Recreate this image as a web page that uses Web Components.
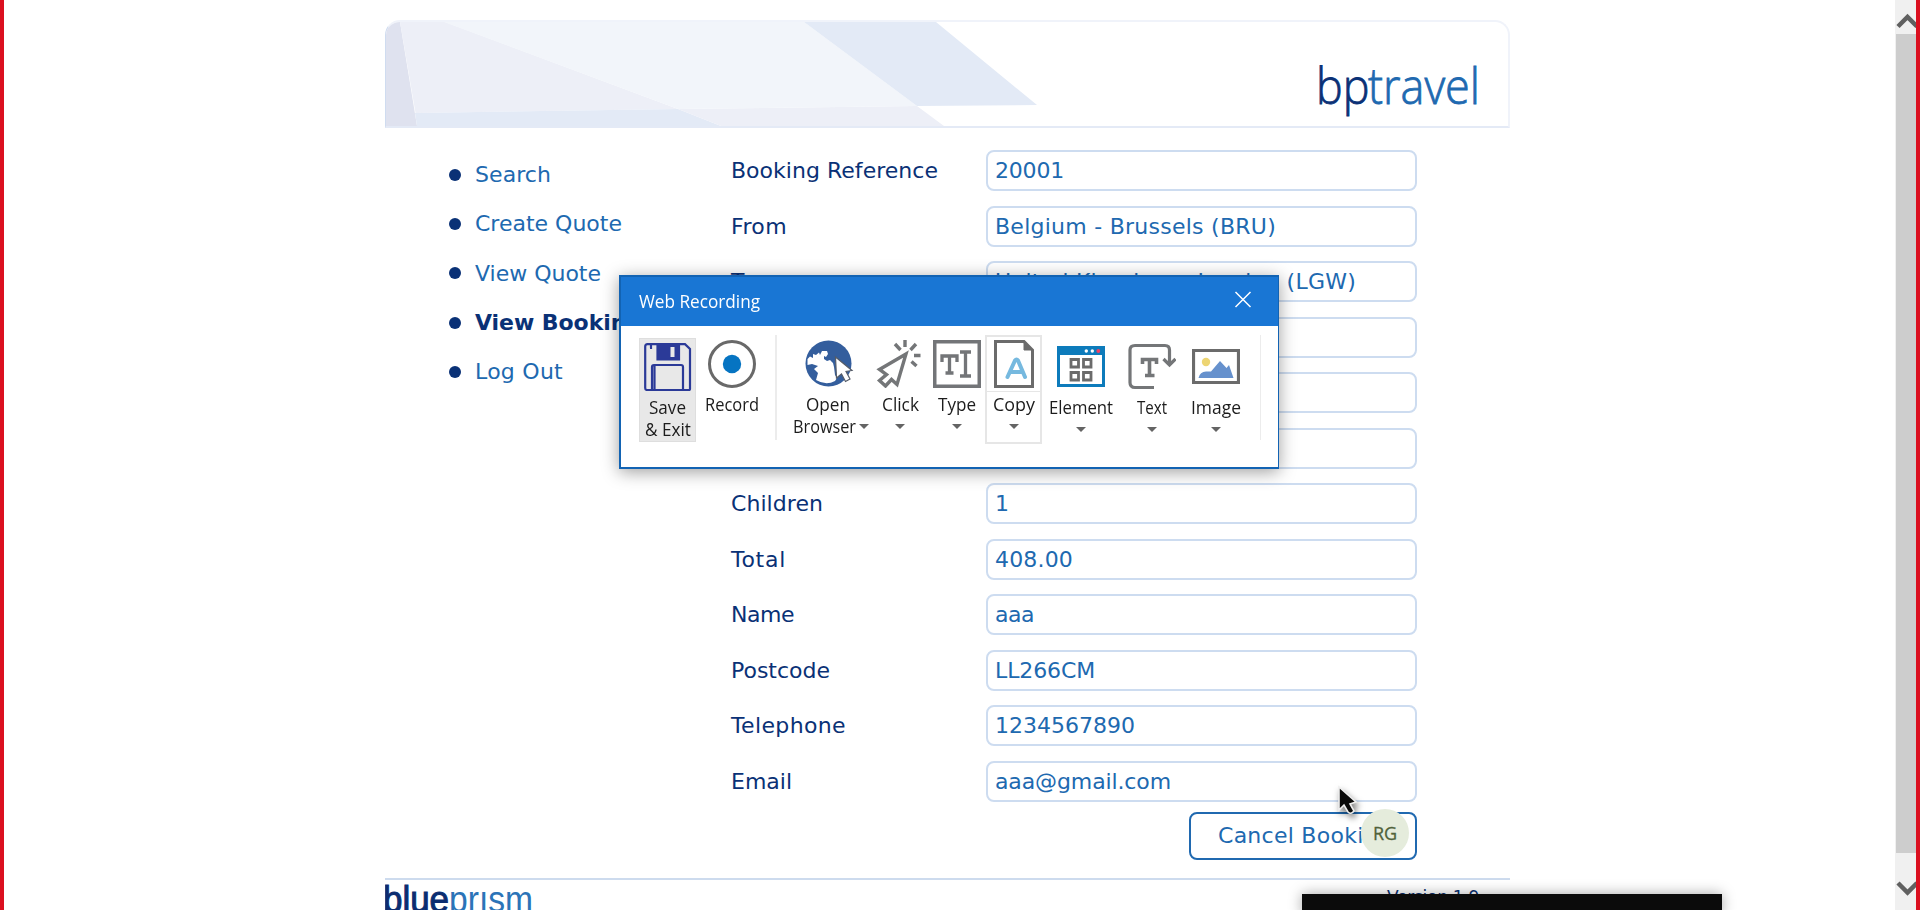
<!DOCTYPE html>
<html lang="en">
<head>
<meta charset="utf-8">
<title>bptravel</title>
<style>
html,body{margin:0;height:100%;overflow:hidden;background:#fff}
body{font-family:"DejaVu Sans",Verdana,sans-serif}
</style>
</head>
<body>
<travel-app></travel-app>
<script>
const define = (name, html, setup) => customElements.define(name, class extends HTMLElement {
  connectedCallback() {
    if (this.shadowRoot) return;
    const t = document.createElement('template');
    t.innerHTML = html;
    this.attachShadow({mode: 'open'}).appendChild(t.content.cloneNode(true));
    if (setup) setup(this, this.shadowRoot);
  }
});

define('travel-app', `
<style>
:host{display:flex;box-sizing:border-box;width:1920px;height:910px;border:solid #db0f1f;border-width:0 4px;position:relative;overflow:hidden}
main{flex:none;width:1125px;margin-left:381px;padding-top:20px;box-sizing:border-box}
.cols{display:flex;height:750px}
travel-nav{width:346px;flex:none}
form{margin:0;padding-top:22px;display:flex;flex-direction:column;width:686px}
.btn{align-self:flex-end;box-sizing:border-box;width:228px;height:48px;border:2px solid #2069b0;border-radius:8px;margin-top:-4px;padding-left:27px;line-height:44px;font-size:22px;color:#2069b0}
footer{border-top:2px solid #cddbee;height:40px;display:flex;justify-content:space-between}
footer svg{flex:none;display:block}
.ver{font-size:17px;color:#0a2f6f;line-height:20px;padding:7px 31px 0 0}
scroll-bar{margin-left:auto}
recording-window{position:absolute;left:615px;top:275px}
.bar{position:absolute;left:1298px;top:894px;width:420px;height:20px;background:#0b0b0b;box-shadow:0 0 14px rgba(0,0,0,.35)}
.rg{position:absolute;left:1357px;top:809px;width:48px;height:48px;border-radius:50%;background:#e5ecdc;color:#50623a;font:500 18px/49px "Open Sans",sans-serif;text-align:center;-webkit-text-stroke:.3px #50623a}
.cur{position:absolute;left:1330px;top:782px;filter:drop-shadow(2px 4px 3px rgba(0,0,0,.5))}
</style>
<main>
 <travel-banner></travel-banner>
 <div class="cols">
  <travel-nav></travel-nav>
  <form>
   <field-row label="Booking Reference" lw="207" value="20001" vw="69"></field-row>
   <field-row label="From" lw="56" value="Belgium - Brussels (BRU)" vw="281"></field-row>
   <field-row label="To" lw="26" value="United Kingdom - London (LGW)" vw="361"></field-row>
   <field-row></field-row><field-row></field-row><field-row></field-row>
   <field-row label="Children" lw="92" value="1"></field-row>
   <field-row label="Total" lw="55" value="408.00" vw="78"></field-row>
   <field-row label="Name" lw="63" value="aaa" vw="39"></field-row>
   <field-row label="Postcode" lw="99" value="LL266CM" vw="100"></field-row>
   <field-row label="Telephone" lw="115" value="1234567890" vw="140"></field-row>
   <field-row label="Email" lw="61" value="aaa@gmail.com" vw="176"></field-row>
   <div class="btn"><fit-text w="174">Cancel Booking</fit-text></div>
  </form>
 </div>
 <footer>
  <svg width="150" height="40"><g font-family="Liberation Sans,Arial,sans-serif" font-size="36"><text x="-2" y="32" fill="#0b2d70" stroke="#0b2d70" stroke-width="1" textLength="66" lengthAdjust="spacingAndGlyphs">blue</text><text x="64" y="32" fill="#2b74b8" textLength="84" lengthAdjust="spacingAndGlyphs">prısm</text></g></svg>
  <div class="ver"><fit-text w="92">Version 1.9</fit-text></div>
 </footer>
</main>
<scroll-bar></scroll-bar>
<svg class="cur" width="32" height="40" viewBox="0 0 32 40"><path d="M5 5v23l5-5 4 7q3 3 6-1l-4-7 6-2z" fill="#0a0a0a" stroke="#eee" stroke-width="1.6"/></svg>
<div class="rg">RG</div>
<div class="bar"></div>
<recording-window></recording-window>`);

define('travel-banner', `
<style>
:host{display:block;box-sizing:border-box;height:108px;border:2px solid #f0f3fa;border-bottom-color:#e4eaf6;border-left:1px solid #cfdcf0;border-radius:15px 15px 0 0;overflow:hidden;background:#fff}
svg{display:block}
</style>
<svg width="1122" height="104" viewBox="386 22 1122 104">
<path d="M386 22H400L417 126H386Z" fill="#dfe2ef"/>
<path d="M400 22H445L678 109L415.500 113Z" fill="#edeff7"/>
<path d="M415 113L678 109L721 126H417Z" fill="#e3eaf6"/>
<path d="M678 109L917 106L944 126H721Z" fill="#edeff7"/>
<path d="M444 22H804L917 106L678 109Z" fill="#f2f5fa"/>
<path d="M804 22H936L1037 105L917 106Z" fill="#e3eaf6"/>
<g font-family="Open Sans,sans-serif" font-size="49" font-weight="300" stroke-width=".8"><text x="1316" y="104" fill="#0a3176" stroke="#0a3176" textLength="53.500" lengthAdjust="spacingAndGlyphs">bp</text><text x="1368" y="104" fill="#2069b0" stroke="#2069b0" textLength="112" lengthAdjust="spacingAndGlyphs">travel</text></g>
</svg>`);

define('travel-nav', `
<style>
:host{display:block;padding-top:22px}
ul{list-style:none;margin:0;padding:0 0 0 64px}
li{display:flex;align-items:center;height:49.300px;font-size:22px;color:#2069b0;white-space:nowrap}
li::before{content:"";width:12px;height:12px;border-radius:50%;background:#0a3176;margin-right:14px;flex:none}
.on{font-weight:bold;color:#0a3176}
</style>
<ul><li><fit-text w="76">Search</fit-text></li><li><fit-text w="147">Create Quote</fit-text></li><li><fit-text w="126">View Quote</fit-text></li><li class="on"><fit-text w="167">View Booking</fit-text></li><li><fit-text w="88">Log Out</fit-text></li></ul>`);

define('field-row', `
<style>
:host{display:flex;height:55.500px;font-size:22px;color:#0a3176;line-height:42px;white-space:nowrap}
label{width:255px;flex:none}
div{box-sizing:border-box;width:431px;height:41px;border:2px solid #cddcf0;border-radius:8px;padding-left:7px;line-height:38px;color:#2069b0}
</style>
<label><fit-text></fit-text></label><div><fit-text></fit-text></div>`, (el, root) => {
  const [l, v] = root.querySelectorAll('fit-text');
  const fill = (node, text, w) => { node.textContent = el.getAttribute(text) || ''; if (el.hasAttribute(w)) node.setAttribute('w', el.getAttribute(w)); };
  fill(l, 'label', 'lw');
  fill(v, 'value', 'vw');
});

define('scroll-bar', `
<style>
:host{display:flex;flex-direction:column;width:21px;height:910px;background:#f0f0f0;overflow:hidden}
svg{flex:none;display:block}
div{height:819px;margin-left:1px;background:#cdcdcd}
</style>
<svg width="21" height="34"><path d="M3 26.500L12.500 17L22 26.500" fill="none" stroke="#606060" stroke-width="4.500"/></svg>
<div></div>
<svg width="21" height="57"><path d="M3 30L12.500 39.500L22 30" fill="none" stroke="#606060" stroke-width="4.500"/></svg>`);

define('recording-window', `
<style>
:host{display:block;box-sizing:border-box;width:660px;height:194px;border:2px solid #1263b3;border-right-width:1px;background:#fff;box-shadow:0 3px 16px rgba(0,0,0,.38);font-family:"Open Sans","Noto Sans",sans-serif}
header{display:flex;justify-content:space-between;align-items:center;box-sizing:border-box;height:49px;background:#1976d4;color:#fff;font-size:18.500px;padding:0 26px 3px 18px}
section{display:flex;padding-top:9px}
hr{border:0;margin:0;width:2px;height:105px;background:#ececec}
svg{display:block}
</style>
<header><fit-text w="121" scale>Web Recording</fit-text><svg width="18" height="18" stroke="#fff" stroke-width="1.500"><path d="M1.500 1L16.500 16M16.500 1L1.500 16"/></svg></header>
<section>
<ribbon-button class="save low" a="Save" aw="37" b="&amp; Exit" bw="46" style="width:57px;margin-left:18px">
 <svg width="48" height="48" fill="none" stroke="#2b3a98" stroke-width="2.200"><path d="M3.500 1.200H41L46 6V46Q46 47 45 47H3Q1.200 47 1.200 45V3.500Q1.200 1.200 3.500 1.200Z"/><path d="M13.500 1V16.500H35V1Z" fill="#2b3a98"/><path d="M26.500 4H30.500V14H26.500Z" fill="#e8e8e8" stroke="none"/><path d="M8 47V24Q8 22 10 22H37Q39 22 39 24V47M10.500 23V46M7 1V5H6"/></svg></ribbon-button>
<ribbon-button a="Record" aw="54" style="width:72px">
 <svg width="48" height="48"><circle cx="24" cy="24" r="22.500" fill="#fff" stroke="#696969" stroke-width="3"/><circle cx="24" cy="24" r="9.200" fill="#0674c2"/></svg></ribbon-button>
<hr style="margin-left:7px">
<ribbon-button a="Open" aw="44" b="Browser" bw="63" caret style="width:76px;margin-left:13px">
 <svg width="52" height="48"><circle cx="24.500" cy="23.500" r="23" fill="#345e9d"/><path d="M3.500 25V19L6 16.500L9 18L9 14L12 15L15 12.500L16 15L18 11L23 11L24 14L22 17L20 16L20 19L23 21L26 20L29 23L30 27L31 35L33 38L31 41Q22 46 12 40L14 33L10 29L14 26L8 24Z" fill="#fff"/><path d="M31.500 17L48 30.500L42 31.500L46 39L41.500 41.500L37.500 34L32.500 38Z" fill="#fff" stroke="#555c68" stroke-width="1.200"/></svg></ribbon-button>
<ribbon-button a="Click" aw="37" caret style="width:50px;margin-left:9px">
 <svg width="48" height="48" fill="none" stroke="#747678" stroke-width="3.400"><path d="M30 14L3.500 29.500L10.500 34.500L3.500 40.500L9.500 46L15.500 39.500L21 44.500L30 14Z"/><path d="M29 0V7M40 4L34.500 10M44.500 15.500H38M40.500 26L35.500 21.500M19 4L24.500 10"/></svg></ribbon-button>
<ribbon-button a="Type" aw="38" caret style="width:56px;margin-left:4px">
 <svg width="48" height="48" fill="none" stroke="#737578" stroke-width="3.600"><path d="M1.700 1.700H46.300V46.300H1.700Z"/><path d="M9 22V16H24V22M16.500 16V33M12.500 33H20.500M27 12H38M32.500 12V36M27 36H38" stroke-width="3.300"/></svg></ribbon-button>
<ribbon-button class="copy" a="Copy" aw="42" caret style="width:57px">
 <svg width="48" height="48" fill="none" stroke="#6b6b6b" stroke-width="3"><path d="M5.500 1.500H34L42.500 10V46.500H5.500Z"/><path d="M34 1.500V10H42.500Z" fill="#6b6b6b" stroke-width="1"/><path d="M17.500 37L25 20.500Q26.500 18.500 28 20.500L35 37M20.500 32H32" stroke="#76b9df" stroke-width="4" stroke-linecap="round"/></svg></ribbon-button>
<ribbon-button class="low" a="Element" aw="64" caret style="width:78px">
 <svg width="48" height="48"><path d="M1.500 4.500H46.500V42.500H1.500Z" fill="#fff" stroke="#0d7bbb" stroke-width="3"/><path d="M0 3H48V12H0Z" fill="#0d7bbb"/><circle cx="29.300" cy="8" r="1.700" fill="#fff"/><circle cx="35.300" cy="8" r="1.700" fill="#fff"/><circle cx="41.300" cy="8" r="1.900" fill="#f04064"/><path d="M14 16.500h7.500v7.500h-7.500zM26.500 16.500h7.500v7.500h-7.500zM14 29.500h7.500v7.500h-7.500zM26.500 29.500h7.500v7.500h-7.500z" fill="none" stroke="#6b6b6b" stroke-width="2.800"/></svg></ribbon-button>
<ribbon-button class="low" a="Text" aw="30" caret style="width:62px;margin-left:1px">
 <svg width="48" height="48" fill="none" stroke="#747678" stroke-width="3.200"><path d="M26 44.500H7Q2 44.500 2 39.500V7Q2 2.500 7 2.500H37Q41.500 2.500 41.500 7V21M35.500 16L41.500 22L47.500 16"/><path d="M14.500 21V16.500H28.500V21M21.500 16V32M17 32.500H26.500" stroke-width="3.600"/></svg></ribbon-button>
<ribbon-button class="low" a="Image" aw="50" caret style="width:64px;margin-left:1px">
 <svg width="48" height="48"><path d="M1.500 7.500H46.500V39.500H1.500Z" fill="#fff" stroke="#6b6b6b" stroke-width="3.200"/><circle cx="14" cy="19" r="4.200" fill="#edd573"/><path d="M6.500 35Q8 28.500 14 28.500H19L28 18L34.500 25L37 22L41.500 35Z" fill="#6691cd"/></svg></ribbon-button>
<hr style="margin-left:12px;width:1px">
</section>`);

define('ribbon-button', `
<style>
:host{display:flex;flex-direction:column;align-items:center;box-sizing:border-box;flex:none;height:109px;padding-top:5px;font-size:18px;line-height:22px;color:#1c1c1c;white-space:nowrap;position:relative}
:host(.low){margin-top:3px;height:104px}
:host(.save){background:#e8e8e8;box-shadow:inset 0 0 0 1px #dedede}
:host(.copy){box-shadow:inset 0 0 0 2px #e6e6e6;background:linear-gradient(#e6e6e6,#e6e6e6) 0 56px/100% 1px no-repeat}
.icon{height:48px;width:48px;margin-bottom:5px;flex:none}
.second{display:flex;align-items:center;height:22px}
.caret{width:0;border:5px solid transparent;border-top:5px solid #646464;border-bottom:0}
:host([b]) .second{margin-right:-5px}
:host([b]) .caret{margin-left:3px}
:host(.save) .second{margin:0}
</style>
<div class="icon"><slot></slot></div>
<div><fit-text class="a" scale></fit-text></div>
<div class="second"><fit-text class="b" scale></fit-text></div>`, (el, root) => {
  for (const k of ['a', 'b']) {
    const n = root.querySelector('.' + k);
    if (!el.hasAttribute(k)) { n.remove(); continue; }
    n.textContent = el.getAttribute(k);
    n.setAttribute('w', el.getAttribute(k + 'w'));
  }
  if (el.hasAttribute('caret')) {
    const c = document.createElement('i');
    c.className = 'caret';
    root.querySelector('.second').append(c);
  }
});

// Sets a run of text to a given width, by tracking or (with "scale") by narrowing its glyphs.
define('fit-text', `
<style>
:host{display:inline-block;white-space:nowrap}
span{display:inline-block;transform-origin:0 50%}
</style><span><slot></slot></span>`, (el, root) => {
  const w = parseFloat(el.getAttribute('w'));
  if (!w) return;
  const s = root.querySelector('span'), n = s.getBoundingClientRect().width;
  if (!n) return;
  if (el.hasAttribute('scale')) { s.style.transform = `scaleX(${w / n})`; el.style.width = w + 'px'; }
  else s.style.letterSpacing = (w - n) / el.textContent.length + 'px';
});
</script>
</body>
</html>
